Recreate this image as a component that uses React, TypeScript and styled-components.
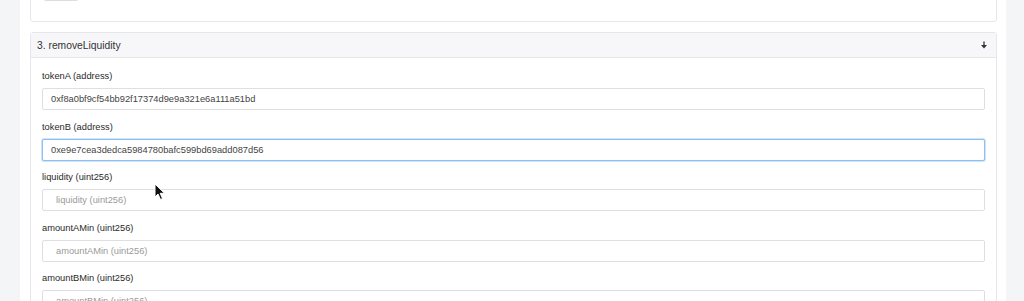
import React from "react";
import styled, { createGlobalStyle } from "styled-components";

const GlobalStyle = createGlobalStyle`
    html, body {
        margin: 0;
        padding: 0;
        background: #ffffff;
        overflow: hidden;
    }
    body {
        font-family: "Liberation Sans", Arial, sans-serif;
        color: #333;
    }
`;

const Page = styled.div`
    display: flex;
    height: 301px;
    overflow: hidden;
`;

const SideStrip = styled.div<{ $w: number }>`
    flex: 0 0 ${(p) => p.$w}px;
    background: #f4f5f7;
`;

const Main = styled.div`
    flex: 1;
    position: relative;
    padding: 0 9px 0 10px;
    margin-top: -36px;
`;

const Card = styled.div`
    border: 1px solid #e6e7ea;
    border-radius: 3px;
    background: #fff;
    margin-bottom: 10px;
`;

const TopBody = styled.div`
    padding: 12px 12px 20px;
`;

const GreyButton = styled.div`
    width: 36px;
    height: 24px;
    border: 1px solid #dcdde0;
    border-radius: 3px;
    background: #f1f2f4;
    box-sizing: border-box;
`;

const Header = styled.div`
    display: flex;
    align-items: center;
    justify-content: space-between;
    height: 24px;
    padding: 0 8px 0 6px;
    background: #f7f7f9;
    border-bottom: 1px solid #e6e7ea;
    font-size: 10.3px;
    color: #333;
`;

const Body = styled.div`
    padding: 11px 11px 0 11px;
`;

const Field = styled.div`
    margin-bottom: 9.5px;
`;

const Label = styled.div`
    font-size: 9.3px;
    line-height: 14px;
    margin-bottom: 5px;
    color: #2a2a2a;
`;

const Input = styled.input<{ $focused?: boolean }>`
    display: block;
    width: 100%;
    box-sizing: border-box;
    height: 22px;
    padding: 0 8px;
    font-family: "Liberation Sans", Arial, sans-serif;
    font-size: 9.3px;
    color: #444;
    background: #fff;
    border: 1px solid ${(p) => (p.$focused ? "#8ebff3" : "#dedfe2")};
    border-radius: 2px;
    box-shadow: ${(p) => (p.$focused ? "0 0 0 1px #cfe3fb" : "none")};
    outline: none;
    &:placeholder-shown {
        padding-left: 13px;
    }
    &::placeholder {
        color: #9a9a9a;
    }
`;

const Cursor = styled.svg`
    position: absolute;
    left: 134px;
    top: 219px;
`;

const fields: { label: string; value?: string; focused?: boolean }[] = [
    { label: "tokenA (address)", value: "0xf8a0bf9cf54bb92f17374d9e9a321e6a111a51bd" },
    { label: "tokenB (address)", value: "0xe9e7cea3dedca5984780bafc599bd69add087d56", focused: true },
    { label: "liquidity (uint256)" },
    { label: "amountAMin (uint256)" },
    { label: "amountBMin (uint256)" },
];

const App = () => {
    return (
        <>
            <GlobalStyle />
            <Page>
                <SideStrip $w={20} />
                <Main>
                    <Card>
                        <TopBody>
                            <GreyButton />
                        </TopBody>
                    </Card>
                    <Card>
                        <Header>
                            <span>3. removeLiquidity</span>
                            <svg width="8" height="8" viewBox="0 0 8 8">
                                <path d="M4 0.5 V6" stroke="#333" strokeWidth="1.3" />
                                <path d="M1 4 L4 7.5 L7 4 Z" fill="#333" />
                            </svg>
                        </Header>
                        <Body>
                            {fields.map((f) => (
                                <Field key={f.label}>
                                    <Label>{f.label}</Label>
                                    <Input
                                        $focused={f.focused}
                                        defaultValue={f.value}
                                        placeholder={f.label}
                                        readOnly
                                    />
                                </Field>
                            ))}
                        </Body>
                    </Card>
                    <Cursor width="12" height="18" viewBox="0 0 12 18">
                        <path
                            d="M1 1 L1 14 L4 11 L6.5 16.5 L8.5 15.6 L6.2 10.3 L10.5 10.3 Z"
                            fill="#111"
                            stroke="#fff"
                            strokeWidth="1"
                        />
                    </Cursor>
                </Main>
                <SideStrip $w={18} />
            </Page>
        </>
    );
};

export default App;
